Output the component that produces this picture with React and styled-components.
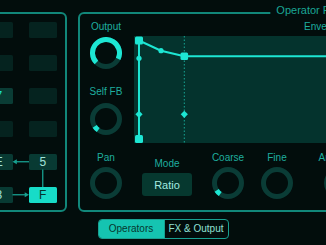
import styled, { createGlobalStyle } from 'styled-components'

const GlobalStyle = createGlobalStyle`
  html, body {
    margin: 0;
    padding: 0;
    overflow: hidden;
    background: #020d0c;
  }
  body {
    font-family: "Liberation Sans", Arial, sans-serif;
  }
`

const Page = styled.main`
  display: flex;
  flex-direction: column;
  width: 326px;
  height: 245px;
  padding-top: 12px;
  box-sizing: border-box;
  overflow: hidden;
`

const Workspace = styled.div`
  display: flex;
  gap: 11px;
  margin-left: -25px;
`

const Panel = styled.section`
  position: relative;
  flex: none;
  height: 200px;
  box-sizing: border-box;
  border: 2px solid #11877a;
  border-radius: 6px;
`

const RoutingPanel = styled(Panel)`
  width: 92px;
  padding: 8px;
`

const RoutingGrid = styled.div`
  position: relative;
  display: grid;
  grid-template-columns: repeat(2, 27.5px);
  grid-auto-rows: 15.5px;
  column-gap: 16.5px;
  row-gap: 17.5px;
`

const OpCell = styled.div`
  display: flex;
  align-items: center;
  justify-content: center;
  border-radius: 1.5px;
  font-size: 12px;
  line-height: 1;
  background: ${(p) =>
    p.$variant === 'selected'
      ? '#17dcc8'
      : p.$variant === 'used'
        ? '#083a33'
        : p.$variant === 'current'
          ? '#0a3c35'
          : '#05231f'};
  color: ${(p) =>
    p.$variant === 'selected' ? '#05342e' : p.$variant === 'current' ? '#1de3cf' : '#a2e4da'};
`

const Wires = styled.svg`
  position: absolute;
  inset: 0;
  pointer-events: none;
  overflow: visible;
`

const OperatorPanel = styled(Panel)`
  width: 500px;
  padding-top: 7px;
  display: flex;
  flex-direction: column;
`

const PanelTitle = styled.h2`
  position: absolute;
  top: -10px;
  left: 50%;
  transform: translateX(-50%);
  margin: 0;
  padding: 0 6px;
  background: #020d0c;
  font-size: 11px;
  font-weight: 400;
  line-height: 13px;
  color: #1aa595;
  white-space: nowrap;
`

const TopSection = styled.div`
  display: flex;
  gap: 2px;
`

const SideColumn = styled.div`
  flex: none;
  width: 52px;
  display: flex;
  flex-direction: column;
  align-items: center;
`

const Label = styled.span`
  display: block;
  font-size: 10px;
  line-height: 12px;
  color: #1fae9f;
  white-space: nowrap;
  margin-top: ${(p) => p.$gap || 0}px;
`

const KnobSvg = styled.svg`
  display: block;
  flex: none;
  margin-top: ${(p) => p.$gap || 0}px;
`

const EnvelopeColumn = styled.div`
  flex: 1;
  display: flex;
  flex-direction: column;
`

const EnvelopeLabel = styled(Label)`
  padding-left: 170px;
`

const Graph = styled.div`
  margin-top: 3px;
  height: 107px;
  background: #04332d;
`

const ControlRow = styled.div`
  display: flex;
  gap: 5px;
  margin-top: 9px;
  padding-left: 4px;
`

const ControlColumn = styled.div`
  flex: none;
  width: ${(p) => p.$width || 44}px;
  display: flex;
  flex-direction: column;
  align-items: center;
  ${(p) => p.$offset && `margin-top: ${p.$offset}px;`}
`

const ModeButton = styled.button`
  margin-top: 3px;
  width: 50px;
  height: 23px;
  border: none;
  border-radius: 3px;
  background: #06382f;
  color: #a3ebe0;
  font-family: "Liberation Sans", Arial, sans-serif;
  font-size: 11px;
  padding: 0;
`

const TabBar = styled.nav`
  align-self: center;
  display: flex;
  margin-top: 7px;
  border: 1px solid #18a090;
  border-radius: 4px;
  overflow: hidden;
`

const Tab = styled.button`
  height: 18px;
  width: ${(p) => p.$width}px;
  padding: 0;
  border: none;
  border-left: ${(p) => (p.$divider ? '1px solid #18a090' : 'none')};
  background: ${(p) => (p.$active ? '#15c4b1' : 'transparent')};
  color: ${(p) => (p.$active ? '#05372f' : '#8fe0d4')};
  font-family: "Liberation Sans", Arial, sans-serif;
  font-size: 10px;
  line-height: 18px;
`

const CYAN = '#1de6d3'

const polar = (deg, r) => {
  const a = (deg * Math.PI) / 180
  return [16 + r * Math.cos(a), 16 + r * Math.sin(a)]
}

const arc = (start, end, r) => {
  const [x1, y1] = polar(start, r)
  const [x2, y2] = polar(end, r)
  const large = end - start > 180 ? 1 : 0
  return `M${x1} ${y1} A${r} ${r} 0 ${large} 1 ${x2} ${y2}`
}

function Knob({ value, gap }) {
  let path = null
  if (value === 0) path = arc(125, 147, 13.5)
  else if (value > 0) path = arc(135, 135 + value * 270, 13.5)
  return (
    <KnobSvg width="32" height="32" $gap={gap}>
      <circle cx="16" cy="16" r="13.5" fill="none" stroke="#0a3c36" strokeWidth="5" />
      {path && <path d={path} fill="none" stroke={CYAN} strokeWidth="5" />}
    </KnobSvg>
  )
}

const Diamond = ({ x, y }) => (
  <polygon points={`${x},${y - 3.6} ${x + 3.6},${y} ${x},${y + 3.6} ${x - 3.6},${y}`} fill={CYAN} />
)

function Envelope() {
  return (
    <svg width="100%" height="107" style={{ display: 'block' }}>
      <line x1="50.3" y1="0" x2="50.3" y2="107" stroke="#17a594" strokeWidth="1" strokeDasharray="1.5 2" />
      <line x1="5" y1="4.5" x2="5" y2="103" stroke={CYAN} strokeWidth="2" />
      <polyline points="5,4.5 27,14.7 50.3,20.3" fill="none" stroke={CYAN} strokeWidth="2" />
      <line x1="50" y1="20.3" x2="1000" y2="20.3" stroke={CYAN} strokeWidth="2" />
      <rect x="1" y="0.6" width="8" height="8" rx="1.5" fill={CYAN} />
      <circle cx="5" cy="22.3" r="2.6" fill={CYAN} />
      <circle cx="27" cy="14.7" r="2.6" fill={CYAN} />
      <rect x="46.5" y="16.5" width="7.6" height="7.6" rx="1.5" fill={CYAN} />
      <Diamond x={5} y={78.3} />
      <Diamond x={50.3} y={78.3} />
      <rect x="1" y="99" width="8" height="8" rx="1.5" fill={CYAN} />
    </svg>
  )
}

const cells = [
  ['', ''],
  ['', ''],
  [{ t: '7', v: 'current' }, ''],
  ['', ''],
  [{ t: 'E', v: 'used' }, { t: '5', v: 'used' }],
  [{ t: '3', v: 'used' }, { t: 'F', v: 'selected' }],
]

const WIRE = '#17a090'

function Routing() {
  return (
    <RoutingPanel>
      <RoutingGrid>
        {cells.flat().map((c, i) => (
          <OpCell key={i} $variant={c ? c.v : 'empty'}>
            {c ? c.t : ''}
          </OpCell>
        ))}
        <Wires width="71.5" height="182.5">
          <line x1="44" y1="139.75" x2="30" y2="139.75" stroke={WIRE} strokeWidth="1.3" />
          <polygon points="27.5,139.75 31.8,137.3 31.8,142.2" fill={WIRE} />
          <line x1="27.5" y1="172.75" x2="41" y2="172.75" stroke={WIRE} strokeWidth="1.3" />
          <polygon points="44,172.75 39.7,170.3 39.7,175.2" fill={WIRE} />
          <line x1="57.75" y1="147.5" x2="57.75" y2="165" stroke={WIRE} strokeWidth="1.3" />
        </Wires>
      </RoutingGrid>
    </RoutingPanel>
  )
}

const knobs = [
  { label: 'Coarse', value: 0 },
  { label: 'Fine' },
  { label: 'Amp Mod', width: 72 },
]

export default function App() {
  return (
    <>
      <GlobalStyle />
      <Page>
        <Workspace>
          <Routing />
          <OperatorPanel>
            <PanelTitle>Operator Parameters</PanelTitle>
            <TopSection>
              <SideColumn>
                <Label>Output</Label>
                <Knob value={0.93} gap={4} />
                <Label $gap={17}>Self FB</Label>
                <Knob value={0} gap={5} />
              </SideColumn>
              <EnvelopeColumn>
                <EnvelopeLabel>Envelope</EnvelopeLabel>
                <Graph>
                  <Envelope />
                </Graph>
              </EnvelopeColumn>
            </TopSection>
            <ControlRow>
              <ControlColumn>
                <Label>Pan</Label>
                <Knob gap={3} />
              </ControlColumn>
              <ControlColumn $width={68} $offset={6}>
                <Label>Mode</Label>
                <ModeButton type="button">Ratio</ModeButton>
              </ControlColumn>
              {knobs.map((k) => (
                <ControlColumn key={k.label} $width={k.width}>
                  <Label>{k.label}</Label>
                  <Knob value={k.value} gap={3} />
                </ControlColumn>
              ))}
            </ControlRow>
          </OperatorPanel>
        </Workspace>
        <TabBar>
          <Tab type="button" $active $width={65}>
            Operators
          </Tab>
          <Tab type="button" $divider $width={64}>
            FX &amp; Output
          </Tab>
        </TabBar>
      </Page>
    </>
  )
}
